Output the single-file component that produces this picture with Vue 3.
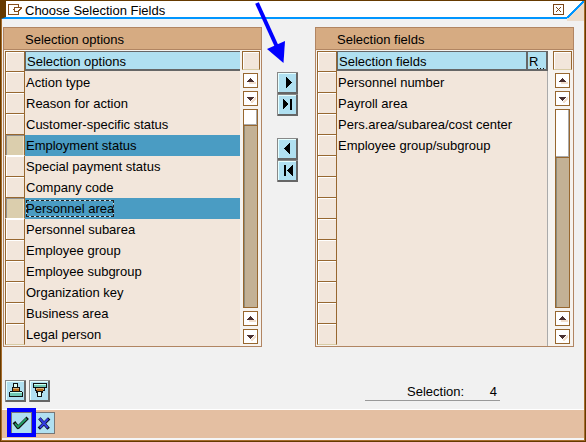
<script setup>
const panels = [
  {
    id: 'options', title: 'Selection options', heading: 'Selection options', extra: false, thumb: 16,
    rows: ['Action type', 'Reason for action', 'Customer-specific status', 'Employment status', 'Special payment status', 'Company code', 'Personnel area', 'Personnel subarea', 'Employee group', 'Employee subgroup', 'Organization key', 'Business area', 'Legal person'],
    selected: [3, 6], focused: 6,
  },
  {
    id: 'fields', title: 'Selection fields', heading: 'Selection fields', extra: true, thumb: 48,
    rows: ['Personnel number', 'Payroll area', 'Pers.area/subarea/cost center', 'Employee group/subgroup', '', '', '', '', '', '', '', '', ''],
    selected: [], focused: -1,
  },
]
const moves = [
  ['M9 5h1v1h1v1h1v1h1v1h1v1h1v1h-1v1h-1v1h-1v1h-1v1h-1v1h-1z', 'M6 5h1v1h1v1h1v1h1v1h1v2h-1v1h-1v1h-1v1h-1v1h-1zM13 5h2v11h-2z'],
  ['M12 5h1v11h-1v-1h-1v-1h-1v-1h-1v-1h-1v-1h-1v-1h1v-1h1v-1h1v-1h1v-1h1z', 'M7 5h2v11h-2zM15 5h1v11h-1v-1h-1v-1h-1v-1h-1v-1h-1v-1h-1v-1h1v-1h1v-1h1v-1h1v-1h1z'],
]
</script>

<template>
  <div class="window">
    <div class="inner">
      <header class="titlebar">
        <svg class="title-icon" width="15" height="11" viewBox="0 0 15 11" shape-rendering="crispEdges">
          <path d="M10.5 3V.5H.5v10h10V8M13 3.5H6.5v4H10M4.5 5.5H7M14 3.5h-1v1h-1v1h-1v1h-1v1" fill="none" stroke="#87501e" />
        </svg>
        <h1>Choose Selection Fields</h1>
        <button class="close" aria-label="Close">
          <svg width="9" height="9" viewBox="0 0 9 9" shape-rendering="crispEdges">
            <path d="M2 2h1v1h1v1h1v-1h1v-1h1v1h-1v1h-1v1h1v1h1v1h-1v-1h-1v-1h-1v1h-1v1h-1v-1h1v-1h1v-1h-1v-1h-1z" fill="#7b4618" />
          </svg>
        </button>
        <svg class="corner" width="17" height="20" viewBox="0 0 17 20" shape-rendering="crispEdges">
          <path d="M17 1v19H0v-3z" fill="#ecdccb" />
          <path d="M0 17L17 0" stroke="#0096ff" stroke-width="2" />
        </svg>
      </header>

      <main class="content">
        <template v-for="(p, pi) in panels" :key="p.id">
          <section class="panel" :class="p.id">
            <h2>{{ p.title }}</h2>
            <div class="table">
              <div class="selectors">
                <i class="cell head" />
                <i v-for="(r, i) in p.rows" :key="i" class="cell" :class="{ on: p.selected.includes(i) }" />
              </div>
              <div class="list">
                <div class="heading">
                  <span>{{ p.heading }}</span>
                  <span v-if="p.extra" class="extra">R<i class="dots" /></span>
                </div>
                <div v-for="(r, i) in p.rows" :key="i" class="row" :class="{ on: p.selected.includes(i) }">
                  <span :class="{ focus: p.focused === i }">{{ r }}</span>
                </div>
              </div>
              <div class="scroll">
                <i class="cell config" />
                <div class="bar">
                  <span v-for="n in 2" :key="n" class="arrow">
                    <svg width="13" height="13" viewBox="0 0 13 13" shape-rendering="crispEdges">
                      <path v-if="n === 1" d="M5 8h7v2H5z" fill="#f2dfcd" />
                      <path v-else d="M6 10l6-6v3l-4 4z" fill="#f2dfcd" />
                      <path :d="n === 1 ? 'M6 4h1v1h1v1h1v1h1v1H3V7h1V6h1V5h1z' : 'M3 5h7v1H9v1H8v1H7v1H6V8H5V7H4V6H3z'" fill="#4a3030" />
                    </svg>
                  </span>
                  <div class="track"><div class="thumb" :style="{ height: p.thumb + 'px' }" /></div>
                  <span v-for="n in 2" :key="n + 2" class="arrow">
                    <svg width="13" height="13" viewBox="0 0 13 13" shape-rendering="crispEdges">
                      <path v-if="n === 1" d="M5 8h7v2H5z" fill="#f2dfcd" />
                      <path v-else d="M6 10l6-6v3l-4 4z" fill="#f2dfcd" />
                      <path :d="n === 1 ? 'M6 4h1v1h1v1h1v1h1v1H3V7h1V6h1V5h1z' : 'M3 5h7v1H9v1H8v1H7v1H6V8H5V7H4V6H3z'" fill="#4a3030" />
                    </svg>
                  </span>
                </div>
              </div>
            </div>
          </section>
          <nav v-if="pi === 0" class="moves">
            <div v-for="(g, gi) in moves" :key="gi" class="group">
              <button v-for="d in g" :key="d" class="btn">
                <svg width="21" height="22" viewBox="0 0 21 22" shape-rendering="crispEdges"><path :d="d" /></svg>
              </button>
            </div>
          </nav>
        </template>
      </main>

      <div class="tools">
        <button class="btn">
          <svg width="21" height="22" viewBox="0 0 21 22" shape-rendering="crispEdges">
            <path d="M8 3h5v4h2v4h2v1h1v5H4v-5h1v-1h2V7h1z" fill="#111" />
            <path d="M9 4h3v3H9z" fill="#dcfff4" /><path d="M8 8h6v3H8z" fill="#b96a19" /><path d="M8 8h6v1H8z" fill="#d9b27b" />
            <path d="M5 12h12v4H5z" fill="#6fc8b5" /><path d="M5 12h12v1H5z" fill="#c8fff0" />
          </svg>
        </button>
        <button class="btn">
          <svg width="21" height="22" viewBox="0 0 21 22" shape-rendering="crispEdges">
            <path d="M4 3h14v5h-2v3h-2v2h-1v4H8v-4H7v-2H6V8H4z" fill="#111" />
            <path d="M5 4h12v3H5z" fill="#6fc8b5" /><path d="M5 4h12v1H5z" fill="#c8fff0" />
            <path d="M7 8h8v2H7z" fill="#d9b27b" /><path d="M8 9h6v2H8z" fill="#b96a19" />
            <path d="M9 12h3v4H9z" fill="#dcfff4" />
          </svg>
        </button>
        <div class="count"><span>Selection:</span><span>4</span></div>
      </div>

      <footer class="footer">
        <span class="marker">
          <button class="btn ok" aria-label="Continue">
            <svg width="20" height="21" viewBox="0 0 20 21">
              <path d="M4 11.500l3 4L15.500 7" fill="none" stroke="#111" stroke-width="3.400" stroke-linejoin="round" stroke-linecap="square" />
              <path d="M4 11.500l3 3.500L15.500 6.500" fill="none" stroke="#22a065" stroke-width="1.800" />
            </svg>
          </button>
        </span>
        <button class="btn cancel" aria-label="Cancel">
          <svg width="18" height="21" viewBox="0 0 18 21">
            <path d="M4.500 6.500l7 8M12 6.500l-8 8" stroke="#080820" stroke-width="3.300" stroke-linecap="square" />
            <path d="M4.200 6l7 8M11.500 6.500l-7 7.500" stroke="#333de0" stroke-width="2" stroke-linecap="square" />
          </svg>
        </button>
      </footer>
    </div>

    <svg class="pointer" width="32" height="62" viewBox="0 0 32 62">
      <path d="M3 1L23 45" stroke="#00f" stroke-width="4" />
      <path d="M13 47L31 39L29.500 61z" fill="#00f" />
    </svg>
  </div>
</template>

<style>
body { margin: 0; overflow: hidden; }
</style>

<style scoped>
* { box-sizing: border-box; }
.window { position: relative; width: 586px; height: 442px; border: 1px solid #663a00; font: 13px "Liberation Sans", Arial, sans-serif; color: #000; background: #f1f1f1; }
.inner { height: 440px; display: flex; flex-direction: column; border: solid #a56c2d; border-width: 0 1px 1px; }
h1, h2 { margin: 0; font: inherit; }
button { margin: 0; padding: 0; font: inherit; }
svg { display: block; flex: none; }
.titlebar { position: relative; flex: none; display: flex; align-items: flex-start; height: 18px; padding: 3px 20px 0 2px; background: #fff; border-bottom: 2px solid #0096ff; margin-left: -1px; border-left: 5px solid #663a00; }
.title-icon { margin-right: 2px; }
h1 { flex: 1; line-height: 15px; margin-top: -1px; }
.close { width: 11px; height: 11px; background: #fff; border: 1px solid #7b4618; }
.corner { position: absolute; right: 0; top: 0; }
.content { flex: none; display: flex; height: 328px; padding: 8px 0 0 1px; }
.panel { width: 259px; height: 320px; border: 1px solid #b18562; background: #f6f3ef; }
h2 { height: 22px; padding: 1px 0 0 21px; line-height: 21px; background: #d6ab82; border-bottom: 1px solid #b18562; }
.table { display: flex; padding: 1px 0 0 1px; height: 296px; }
.selectors { flex: none; width: 20px; }
.cell { display: block; height: 21px; background: #f2e6db; border: 1px solid #97672f; border-top: 0; box-shadow: inset 1px 1px #fff; }
.cell.head { border-top: 1px solid #97672f; }
.cell:last-child { border-bottom-color: #d8cba4; }
.cell.on { background: #dbcead; border-bottom-color: #fff; box-shadow: inset 1px 1px #929292, inset -1px 0 #eee2cb; }
.list { flex: none; width: 215px; background: #f2e6db; }
.heading { display: flex; height: 20px; margin-bottom: 1px; background: #b0e0f1; border: solid #666; border-width: 1px 0 2px 1px; line-height: 19px; padding-left: 1px; }
.heading > span:first-child { flex: 1; }
.extra { position: relative; width: 22px; border: solid #666; border-width: 0 2px; padding-left: 1px; }
.dots { position: absolute; right: 2px; bottom: 0; width: 7px; height: 1px; background: repeating-linear-gradient(90deg, #111 0 1px, transparent 1px 3px); }
.row { height: 21px; padding-left: 1px; line-height: 21px; }
.row.on { background: #4a9cc3; }
.focus { display: inline-block; height: 17px; line-height: 17px; vertical-align: top; margin-top: 2px; outline: 1px dashed #222; outline-offset: -1px; box-shadow: inset 0 0 0 1px #cfdfe5; }
.scroll { flex: 1; padding-left: 2px; }
.cell.config { width: 18px; height: 19px; border-top: 1px solid #97672f; border-bottom-color: #d8cba4; }
.bar { width: 15px; margin: 3px 0 0 1px; }
.arrow { display: block; width: 15px; height: 15px; background: #fff; border: 1px solid #97672f; margin-bottom: 3px; }
.track { height: 199px; margin-bottom: 3px; background: #c3b195; border: 1px solid #97672f; box-shadow: inset 1px 0 #8c8b7b; }
.thumb { background: #fff; border: solid #97672f; border-width: 0 0 1px; box-shadow: inset -1px -1px #aaa; }
.fields .list { width: 211px; border-right: 1px solid #aaa; }
.fields .heading { margin-right: -1px; }
.fields .scroll { padding-left: 5px; }
.fields .bar { margin-left: 2px; }
.fields .cell.config { width: 19px; }
.moves { display: flex; flex-direction: column; gap: 22px; padding: 45px 17px 0 15px; }
.btn { display: block; flex: none; width: 21px; height: 22px; background: #b0e0f1; border: 0; box-shadow: inset 1px 1px #888, inset -2px -2px #666, inset 2px 2px #e6ffff; }
.tools { flex: none; display: flex; gap: 3px; height: 62px; padding: 33px 0 0 3px; }
.count { display: flex; justify-content: space-between; width: 135px; height: 18px; margin: 3px 0 0 312px; padding: 0 3px 0 42px; line-height: 17px; border-bottom: 1px solid #999; }
.footer { flex: none; display: flex; height: 31px; border: solid #fff; border-width: 1px 0 2px; border-bottom-color: #f5f5f5; padding-left: 5px; background: #e4bfa2; }
.marker { flex: none; width: 29px; height: 29px; margin-top: -2px; border: 4px solid #00f; background: #e4bfa2; }
.ok { width: 21px; height: 21px; box-shadow: inset 1px 1px #777, inset -1px 0 #777; }
.cancel { width: 19px; margin-top: 2px; box-shadow: inset -1px 0 #777, inset 0 1px #777, inset 0 -1px #777; }
.pointer { position: absolute; left: 253px; top: 1px; }
</style>
